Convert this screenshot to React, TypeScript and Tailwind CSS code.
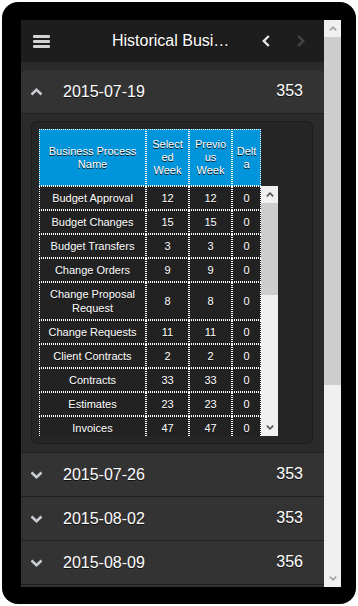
import { type ReactNode } from "react";

type Week = { date: string; total: number; open?: boolean };

const weeks: Week[] = [
  { date: "2015-07-19", total: 353, open: true },
  { date: "2015-07-26", total: 353 },
  { date: "2015-08-02", total: 353 },
  { date: "2015-08-09", total: 356 },
  { date: "2015-08-16", total: 356 },
  { date: "2015-08-23", total: 358 },
  { date: "2015-08-30", total: 358 },
  { date: "2015-09-06", total: 361 },
  { date: "2015-09-13", total: 361 },
  { date: "2015-09-20", total: 364 },
  { date: "2015-09-27", total: 364 },
];

const rows: [string, number, number, number][] = [
  ["Budget Approval", 12, 12, 0],
  ["Budget Changes", 15, 15, 0],
  ["Budget Transfers", 3, 3, 0],
  ["Change Orders", 9, 9, 0],
  ["Change Proposal Request", 8, 8, 0],
  ["Change Requests", 11, 11, 0],
  ["Client Contracts", 2, 2, 0],
  ["Contracts", 33, 33, 0],
  ["Estimates", 23, 23, 0],
  ["Invoices", 47, 47, 0],
  ["Issues", 6, 6, 0],
  ["Meeting Minutes", 14, 14, 0],
  ["Punch Lists", 5, 5, 0],
  ["Purchase Orders", 28, 28, 0],
  ["RFIs", 41, 41, 0],
  ["Submittals", 36, 36, 0],
  ["Transmittals", 19, 19, 0],
  ["Daily Reports", 22, 22, 0],
  ["Drawings", 7, 7, 0],
  ["Inspections", 4, 4, 0],
  ["Risks", 3, 3, 0],
  ["Timesheets", 13, 13, 0],
  ["Vendors", 1, 1, 0],
];

const cell = "border border-dotted border-white px-[3px] text-center [text-shadow:0_1px_0_#111]";

// the browser hides native scrollbars, so the rails are drawn
function Rail({ thumb, arrow }: { thumb: string; arrow: string }) {
  return (
    <div className="flex w-[17px] shrink-0 flex-col bg-[#f0f0f0]">
      <div className="flex h-[17px] items-center justify-center">
        <svg width="8" height="5" viewBox="0 0 8 5">
          <polyline points="0.8,4.4 4,1.2 7.2,4.4" fill="none" stroke={arrow} strokeWidth="1.6" />
        </svg>
      </div>
      <div className="flex-1">
        <div className={`${thumb} bg-[#cdcdcd]`} />
      </div>
      <div className="flex h-[17px] items-center justify-center">
        <svg width="8" height="5" viewBox="0 0 8 5">
          <polyline points="0.8,0.6 4,3.8 7.2,0.6" fill="none" stroke={arrow} strokeWidth="1.6" />
        </svg>
      </div>
    </div>
  );
}

function Cols() {
  return (
    <colgroup>
      <col className="w-[107px]" />
      <col className="w-[43px]" />
      <col className="w-[43px]" />
      <col className="w-[29px]" />
    </colgroup>
  );
}

function Th({ children }: { children: ReactNode }) {
  return <th className={`${cell} py-[8px] align-middle font-normal leading-[13px] [overflow-wrap:anywhere]`}>{children}</th>;
}

function Td({ children }: { children: ReactNode }) {
  return <td className={`${cell} py-[4px] align-middle leading-[14px]`}>{children}</td>;
}

function Caret({ up }: { up?: boolean }) {
  return (
    <svg width="13" height="8" viewBox="0 0 13 8" className="shrink-0">
      <polyline
        points={up ? "1.5,6.5 6.5,1.8 11.5,6.5" : "1.5,1.5 6.5,6.2 11.5,1.5"}
        fill="none"
        stroke="#c9ccd2"
        strokeWidth="2.6"
      />
    </svg>
  );
}

function ReportTable() {
  return (
    <div className="rounded-[6px] border border-[#1d1d1d] bg-[#262626] p-[7px]">
      <table className="w-[222px] table-fixed border-separate border-spacing-0 bg-[#0095db] text-[11px] text-white">
        <Cols />
        <thead>
          <tr>
            <Th>Business Process Name</Th>
            <Th>Selected Week</Th>
            <Th>Previous Week</Th>
            <Th>Delta</Th>
          </tr>
        </thead>
      </table>
      <div className="flex h-[250px] w-[239px]">
        <div className="w-[222px] overflow-hidden">
          <table className="w-[222px] table-fixed border-separate border-spacing-0 bg-[#222] text-[11px] text-white">
            <Cols />
            <tbody>
              {rows.map(([name, sel, prev, delta]) => (
                <tr key={name}>
                  <Td>{name}</Td>
                  <Td>{sel}</Td>
                  <Td>{prev}</Td>
                  <Td>{delta}</Td>
                </tr>
              ))}
            </tbody>
          </table>
        </div>
        <Rail thumb="h-[92px]" arrow="#555555" />
      </div>
    </div>
  );
}

export default function App() {
  return (
    <div className="min-h-[606px] bg-white p-[2px] font-['Liberation_Sans',Arial,sans-serif]">
      <div className="h-[602px] w-[354px] rounded-[16px] bg-black pl-[19px] pt-[18px]">
        <div className="flex h-[567px] w-[320px]">
          <div className="w-[303px] overflow-hidden bg-[#2a2a2a]">
            <header className="flex h-[42px] items-center bg-[#1d1d1d]">
              <div className="flex w-[91px] flex-col gap-[2px] pl-[12px]">
                <span className="h-[3px] w-[17px] rounded-[1px] bg-[#d2d2d2]" />
                <span className="h-[3px] w-[17px] rounded-[1px] bg-[#d2d2d2]" />
                <span className="h-[3px] w-[17px] rounded-[1px] bg-[#d2d2d2]" />
              </div>
              <h1 className="w-[121px] truncate text-center text-[16px] text-white [text-shadow:0_1px_0_#111]">
                Historical Business Process Activity
              </h1>
              <div className="ml-[29px] flex items-center gap-[27px]">
                <svg width="8" height="12" viewBox="0 0 8 12">
                  <polyline points="6.8,1 1.8,6 6.8,11" fill="none" stroke="#e6e6e6" strokeWidth="2.4" />
                </svg>
                <svg width="8" height="12" viewBox="0 0 8 12">
                  <polyline points="1.2,1 6.2,6 1.2,11" fill="none" stroke="#474747" strokeWidth="2.4" />
                </svg>
              </div>
            </header>

            <div className="pt-[8px] pb-[8px]">
              {weeks.map((w, i) => (
                <section key={w.date} className="border-b border-[#1f1f1f]">
                  <div
                    className={`flex h-[43px] items-center bg-[#333] pl-[9px] pr-[21px] text-[16px] text-white [text-shadow:0_1px_0_#111] ${
                      i === 0 ? "rounded-t-[5px]" : ""
                    }`}
                  >
                    <Caret up={w.open} />
                    <span className="ml-[20px] flex-1">{w.date}</span>
                    <span className="-mt-[2px]">{w.total}</span>
                  </div>
                  {w.open && (
                    <div className="border-t border-[#1f1f1f] bg-[#2b2b2b] pb-[8px] pl-[10px] pr-[11px] pt-[7px]">
                      <ReportTable />
                    </div>
                  )}
                </section>
              ))}
            </div>
          </div>
          <Rail thumb="h-[348px]" arrow="#a3a3a3" />
        </div>
      </div>
    </div>
  );
}
